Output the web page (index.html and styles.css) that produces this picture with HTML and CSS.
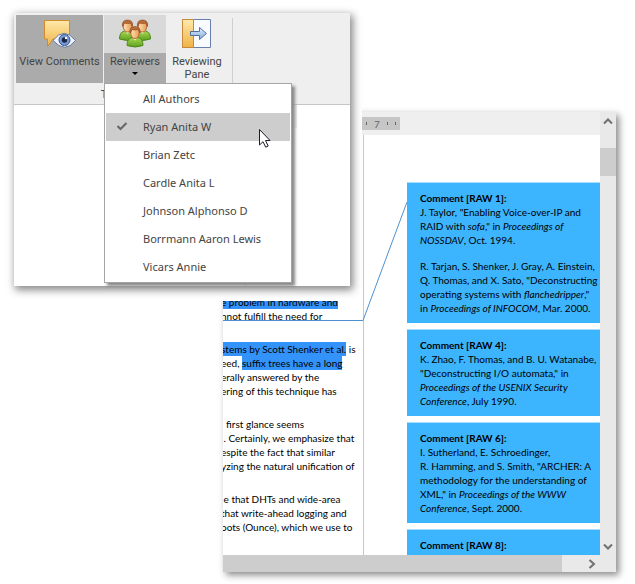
FILE: index.html
```html
<!DOCTYPE html>
<html lang="en">
<head>
<meta charset="utf-8">
<title>Reviewers</title>
<link rel="stylesheet" href="styles.css">
</head>
<body>
<main class="scene">
  <section class="document" aria-label="Document">
    <div class="ruler"><div class="ruler-part"><i></i><span>7</span><i></i><i></i></div></div>
    <div class="page">
      <div class="text">
        <p><span><mark>e problem in hardware and</mark></span><span>nnot fulfill the need for</span></p>
        <p><span><mark>stems by Scott Shenker et al.</mark> is</span><span>eed, <mark>suffix trees have a long</mark></span><span>erally answered by the</span><span>ering of this technique has</span></p>
        <p><span>&nbsp; first glance seems</span><span>&nbsp;. Certainly, we emphasize that</span><span>espite the fact that similar</span><span>yzing the natural unification of</span></p>
        <p><span>&nbsp;e that DHTs and wide-area</span><span>that write-ahead logging and</span><span>oots (Ounce), which we use to</span></p>
      </div>
      <svg class="connector" width="184" height="200" viewBox="0 0 184 200" aria-hidden="true"><path d="M0 185.500H140L184 67" fill="none" stroke="#5090d0"/></svg>
      <div class="comments">
        <article><h2>Comment [RAW 1]:</h2>
          <p>J. Taylor, "Enabling Voice-over-IP and<br>RAID with <em>sofa</em>," in <em>Proceedings of<br>NOSSDAV</em>, Oct. 1994.</p>
          <p>R. Tarjan, S. Shenker, J. Gray, A. Einstein,<br>Q. Thomas, and X. Sato, "Deconstructing<br>operating systems with <em>flanchedripper</em>,"<br>in <em>Proceedings of INFOCOM</em>, Mar. 2000.</p></article>
        <article><h2>Comment [RAW 4]:</h2>
          <p>K. Zhao, F. Thomas, and B. U. Watanabe,<br>"Deconstructing I/O automata," in<br><em>Proceedings of the USENIX Security<br>Conference</em>, July 1990.</p></article>
        <article><h2>Comment [RAW 6]:</h2>
          <p>I. Sutherland, E. Schroedinger,<br>R. Hamming, and S. Smith, "ARCHER: A<br>methodology for the understanding of<br>XML," in <em>Proceedings of the WWW<br>Conference</em>, Sept. 2000.</p></article>
        <article><h2>Comment [RAW 8]:</h2>
          <p>R. Hamming, "Simplifying hash and tables</p></article>
      </div>
    </div>
    <div class="vscroll">
      <button aria-label="Scroll up"><svg width="10" height="8" viewBox="0 0 10 8"><path d="M1 6.500 5 2.500 9 6.500"/></svg></button>
      <div class="vthumb"></div>
      <button class="down" aria-label="Scroll down"><svg width="10" height="8" viewBox="0 0 10 8"><path d="M1 1.500 5 5.500 9 1.500"/></svg></button>
    </div>
    <div class="hscroll">
      <div class="hthumb"></div>
      <button aria-label="Scroll right"><svg width="8" height="10" viewBox="0 0 8 10"><path d="M1.500 1 6 5 1.500 9"/></svg></button>
    </div>
  </section>

  <section class="window" aria-label="Review ribbon">
    <div class="ribbon">
      <div class="tools">
        <button class="tool view">
          <svg width="32" height="32" viewBox="0 0 32 32" aria-hidden="true">
            <defs><linearGradient id="gold" x2="0" y2="1"><stop stop-color="#ffe9aa"/><stop offset="1" stop-color="#efb347"/></linearGradient></defs>
            <path d="M.5 2.500H25.500V21H9L3.500 28.500V21H.5Z" fill="url(#gold)" stroke="#d28b2d"/>
            <path d="M9 22.500Q20 8 31.500 22.500Q21 36 9 22.500Z" fill="#edf4ff" stroke="#63779a"/>
            <circle cx="20.500" cy="22" r="5.500" fill="#7898d3" stroke="#3e5688"/><circle cx="20.500" cy="22" r="2.700" fill="#172643"/><circle cx="22" cy="20" r="1.200" fill="#fff"/>
          </svg><span>View Comments</span></button>
        <button class="tool reviewers" aria-expanded="true">
          <svg width="32" height="32" viewBox="0 0 32 32" aria-hidden="true">
            <defs><linearGradient id="green" x2="0" y2="1"><stop stop-color="#a9d950"/><stop offset="1" stop-color="#5e9f1f"/></linearGradient>
            <linearGradient id="skin"><stop stop-color="#ffe1b2"/><stop offset="1" stop-color="#e79d58"/></linearGradient>
            <g id="person"><path d="M-8 17Q-8 10-3 9L0 11 3 9Q8 10 8 17Q0 20-8 17Z" fill="url(#green)" stroke="#4c891d"/><path d="M-3 8.500 0 12 3 8.500Z" fill="#fff3dc"/><ellipse cy="4.500" rx="4.200" ry="5.500" fill="url(#skin)" stroke="#b96730"/><path d="M-5 4.500Q-6-2 0-2Q6-2 5 4.500L3.500 1Q0 2-3 1Z" fill="#b86c38" stroke="#8c451e" stroke-width=".6"/></g></defs>
            <use href="#person" x="8.500" y="4"/><use href="#person" x="23.500" y="4"/><use href="#person" x="16" y="10.500"/>
          </svg><span>Reviewers<b class="caret"></b></span></button>
        <button class="tool pane">
          <svg width="32" height="32" viewBox="0 0 32 32" aria-hidden="true">
            <defs><linearGradient id="blue" x2="0" y2="1"><stop stop-color="#e5f1ff"/><stop offset="1" stop-color="#7da6db"/></linearGradient></defs>
            <path d="M1.500 1.500H29.500V29.500H1.500Z" fill="#f8fbff" stroke="#6881ac"/><path d="M1.500 1.500H12.500V29.500H1.500Z" fill="url(#gold)" stroke="#c78a3b"/>
            <path d="M9.500 13.500H18.500V9.500L25.500 15.500 18.500 21.500V17.500H9.500Z" fill="url(#blue)" stroke="#536f9d"/>
          </svg><span>Reviewing<br>Pane</span></button>
        <div class="separator"></div>
      </div>
      <div class="caption">T</div>
    </div>
    <div class="workspace"><div class="strip"></div></div>
    <ul class="menu">
      <li><button>All Authors</button></li>
      <li><button class="selected"><svg width="12" height="10" viewBox="0 0 12 10" aria-hidden="true"><path d="M1.500 5 4.500 8 10.500 2"/></svg>Ryan Anita W</button></li>
      <li><button>Brian Zetc</button></li>
      <li><button>Cardle Anita L</button></li>
      <li><button>Johnson Alphonso D</button></li>
      <li><button>Borrmann Aaron Lewis</button></li>
      <li><button>Vicars Annie</button></li>
    </ul>
    <svg class="pointer" width="14" height="21" viewBox="0 0 14 21" aria-hidden="true"><path d="M1.500 1.500V17L5 13.700 7.700 19.200 10.200 18 7.500 12.500H12Z" fill="#fff" stroke="#1b1b2b"/></svg>
  </section>
</main>
</body>
</html>
```
FILE: styles.css
```css
* { box-sizing: border-box; }
body { margin: 0; background: #fff; color: #444; font-family: "Noto Sans", sans-serif; font-size: 11px; }
button { border: 0; padding: 0; margin: 0; background: none; color: inherit; font: inherit; }
h2, p, ul { margin: 0; padding: 0; }
.scene {
  display: grid;
  grid-template-columns: 209px 127px 1fr;
  grid-template-rows: 99px 174px 286px;
  padding: 13px 19px 12px 14px;
}

/* Ribbon window */
.window {
  grid-area: 1 / 1 / 3 / 3;
  position: relative;
  z-index: 1;
  display: flex;
  flex-direction: column;
  background: #fff;
  box-shadow: 2px 3px 8px 1px #888, 0 0 0 12px #fff, 0 3px 0 12px #fff;
}
.ribbon { height: 92px; background: #efefef; border-bottom: 1px solid #c6c6c6; }
.tools { display: flex; padding: 2px 2px 0; height: 70px; font-family: Roboto, sans-serif; font-size: 11px; }
.tool { display: flex; flex-direction: column; align-items: center; line-height: 13px; padding-top: 3px; white-space: nowrap; }
.tool svg { flex: none; }
.tool span { padding-top: 5px; text-align: center; }
.view { width: 87px; margin-right: 1px; background: #ababab; }
.reviewers { width: 62px; background: #d9d9d9; }
.reviewers span { flex: 1; align-self: stretch; margin-top: 3px; padding-top: 2px; background: #ababab; }
.pane { width: 62px; }
.caret { display: block; width: 0; margin: 4px auto 0; border: 3px solid transparent; border-top-color: #000; border-bottom: 0; }
.separator { width: 1px; margin: 3px 0 0 4px; background: #cfcfcf; }
.caption { padding-left: 87px; line-height: 22px; }
.workspace { flex: 1; margin-left: 90px; width: 142px; border-right: 1px solid #ccc; }
.strip { width: 193px; height: 23px; background: #efefef; }
.menu {
  position: absolute;
  left: 90px;
  top: 70px;
  width: 188px;
  padding: 1px;
  list-style: none;
  background: #fff;
  border: 1px solid #a5a5a5;
  box-shadow: 3px 3px 3px #888;
}
.menu button { display: flex; align-items: center; width: 100%; height: 28px; padding: 0 0 2px 37px; }
.menu .selected { padding-left: 10px; background: #cdcdcd; }
.selected svg { margin-right: 15px; }
.selected path { fill: none; stroke: #666; stroke-width: 2; }
.pointer { position: absolute; left: 244px; top: 115px; }

/* Document window */
.document {
  grid-area: 2 / 2 / 4 / 4;
  display: grid;
  grid-template: 23px minmax(0, 1fr) 17px / minmax(0, 1fr) 16px;
  overflow: hidden;
  box-shadow: 3px 3px 7px #888;
  background: #fff;
  color: #000;
  font-family: Lato, sans-serif;
  font-size: 10px;
  line-height: 14px;
}
.ruler { background: #efefef; padding: 5px 0 5px 139px; }
.ruler-part { display: flex; align-items: center; justify-content: space-around; width: 38px; height: 13px; background: #c6c6c6; color: #666; }
.ruler-part i { width: 1px; height: 3px; background: #666; }
.page { grid-row: 2; position: relative; display: grid; grid-template-columns: 141px 1fr; column-gap: 43px; overflow: hidden; }
.text { border-right: 1px solid #c8c8c8; padding-top: 160px; white-space: nowrap; }
.text p { margin: 0 0 19px -2px; }
.text span { display: block; }
mark { display: inline-block; height: 14px; background: #3393fb; color: inherit; }
.connector { position: absolute; left: 0; top: 0; }
.comments { display: flex; flex-direction: column; gap: 6px; padding-top: 47px; white-space: nowrap; }
.comments article { flex: none; padding: 8px 0 8px 13px; background: #3cb4fe; border-top: 1px solid #a5dcff; }
.comments h2 { font-size: 10px; font-weight: 700; }
.comments p + p { margin-top: 12px; }
.vscroll { grid-column: 2; grid-row: 1 / 3; display: flex; flex-direction: column; background: #e9e9e9; }
.vscroll button { height: 17px; line-height: 0; }
.vscroll .down { margin-top: auto; }
.vthumb { height: 28px; margin-top: 19px; background: #cdcdcd; }
.hscroll { grid-column: 1 / 3; display: flex; background: #e9e9e9; }
.hthumb { flex: 1; background: #cdcdcd; }
.hscroll button { width: 54px; padding-left: 5px; line-height: 0; }
.document button path { fill: none; stroke: #707070; stroke-width: 2; }
```
